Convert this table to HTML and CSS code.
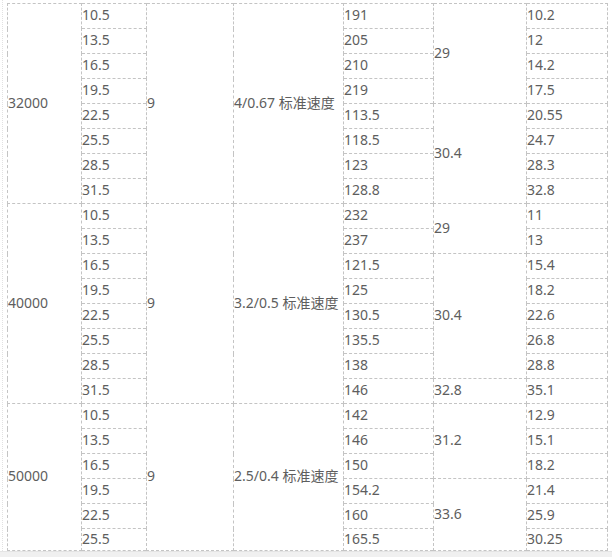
FILE: index.html
```html
<!DOCTYPE html>
<html lang="zh-CN">
<head>
<meta charset="utf-8">
<title>参数表</title>
<link rel="stylesheet" href="styles.css">
</head>
<body>
<div class="page">
  <div class="frame">
    <table class="spec">
      <colgroup>
        <col class="w1"><col class="w2"><col class="w3"><col class="w4"><col class="w5"><col class="w6"><col class="w7">
      </colgroup>
      <tbody>
        <tr><td rowspan="8">32000</td><td>10.5</td><td rowspan="8">9</td><td rowspan="8">4/0.67 标准速度</td><td>191</td><td rowspan="4">29</td><td>10.2</td></tr>
        <tr><td>13.5</td><td>205</td><td>12</td></tr>
        <tr><td>16.5</td><td>210</td><td>14.2</td></tr>
        <tr><td>19.5</td><td>219</td><td>17.5</td></tr>
        <tr><td>22.5</td><td>113.5</td><td rowspan="4">30.4</td><td>20.55</td></tr>
        <tr><td>25.5</td><td>118.5</td><td>24.7</td></tr>
        <tr><td>28.5</td><td>123</td><td>28.3</td></tr>
        <tr><td>31.5</td><td>128.8</td><td>32.8</td></tr>

        <tr><td rowspan="8">40000</td><td>10.5</td><td rowspan="8">9</td><td rowspan="8">3.2/0.5 标准速度</td><td>232</td><td rowspan="2">29</td><td>11</td></tr>
        <tr><td>13.5</td><td>237</td><td>13</td></tr>
        <tr><td>16.5</td><td>121.5</td><td rowspan="5">30.4</td><td>15.4</td></tr>
        <tr><td>19.5</td><td>125</td><td>18.2</td></tr>
        <tr><td>22.5</td><td>130.5</td><td>22.6</td></tr>
        <tr><td>25.5</td><td>135.5</td><td>26.8</td></tr>
        <tr><td>28.5</td><td>138</td><td>28.8</td></tr>
        <tr><td>31.5</td><td>146</td><td>32.8</td><td>35.1</td></tr>

        <tr><td rowspan="6">50000</td><td>10.5</td><td rowspan="6">9</td><td rowspan="6">2.5/0.4 标准速度</td><td>142</td><td rowspan="3">31.2</td><td>12.9</td></tr>
        <tr><td>13.5</td><td>146</td><td>15.1</td></tr>
        <tr><td>16.5</td><td>150</td><td>18.2</td></tr>
        <tr><td>19.5</td><td>154.2</td><td rowspan="3">33.6</td><td>21.4</td></tr>
        <tr><td>22.5</td><td>160</td><td>25.9</td></tr>
        <tr class="short"><td>25.5</td><td>165.5</td><td>30.25</td></tr>
      </tbody>
    </table>
  </div>
  <div class="scrollbar"></div>
</div>
</body>
</html>
```

FILE: styles.css
```css
html, body {
  margin: 0;
  padding: 0;
  background: #ffffff;
}

.page {
  width: 612px;
  height: 557px;
  display: flex;
  flex-direction: column;
  overflow: hidden;
}

.frame {
  flex: 1;
  padding: 3px 0 0 4px;
  margin-left: 2px;
  border-left: 1px dotted #e2e2e2;
  overflow: hidden;
}

.spec {
  border-collapse: collapse;
  table-layout: fixed;
  width: 600px;
  font-family: "Noto Sans", "Noto Sans CJK SC", sans-serif;
  font-size: 14px;
  color: #5e5e5e;
}

.w1 { width: 74px; }
.w2 { width: 65px; }
.w3 { width: 87px; }
.w4 { width: 110px; }
.w5 { width: 90px; }
.w6 { width: 93px; }
.w7 { width: 81px; }

.spec td {
  border: 1px dashed #c4c4c4;
  padding: 0 0 3px 0;
  height: 21px;
  line-height: 21px;
  vertical-align: middle;
  text-align: left;
  white-space: nowrap;
  overflow: hidden;
}

.spec .short td {
  height: 19px;
  line-height: 19px;
  padding-bottom: 2px;
}

.scrollbar {
  height: 5px;
  background: #f0f0f0;
  border-top: 1px solid #e4e4e4;
}
```
